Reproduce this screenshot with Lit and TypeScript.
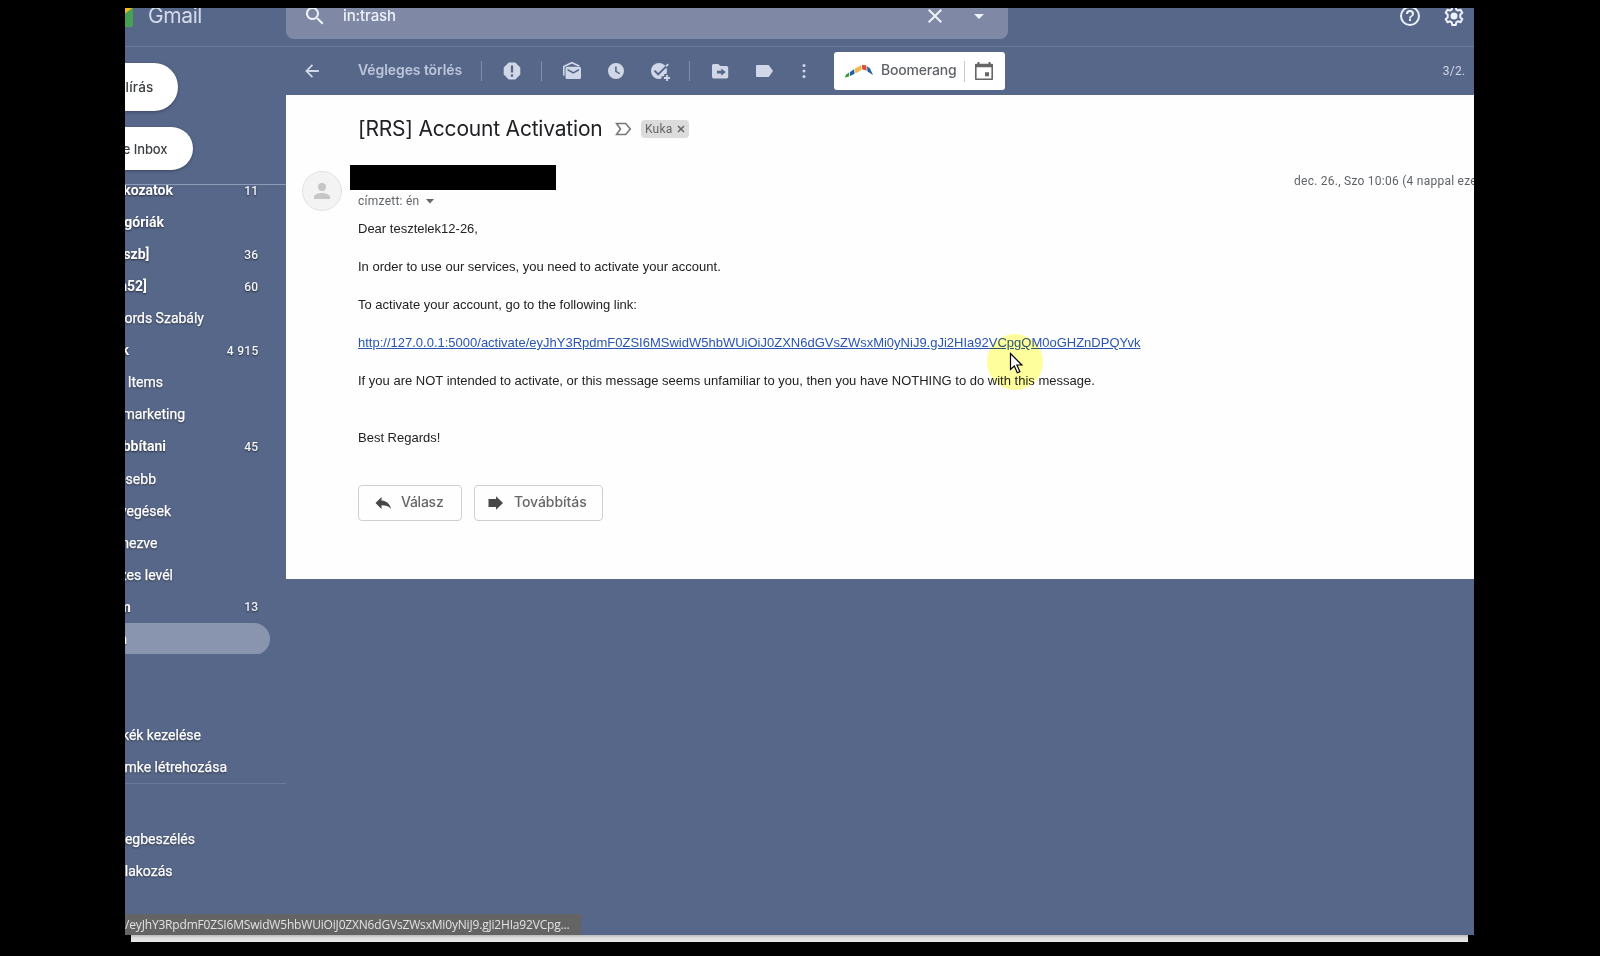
import { LitElement, html, css, svg } from 'lit';
import { customElement } from 'lit/decorators.js';
import { classMap } from 'lit/directives/class-map.js';

interface Label {
  text: string;
  width: number;
  count?: string;
  bold?: boolean;
  active?: boolean;
}

const labels: Label[] = [
  { text: 'Hivatkozatok', width: 48, count: '11', bold: true },
  { text: 'Kategóriák', width: 39, bold: true },
  { text: '[szb]', width: 24.5, count: '36', bold: true },
  { text: '[n52]', width: 22, count: '60', bold: true },
  { text: 'Records Szabály', width: 79 },
  { text: 'k', width: 4, count: '4 915', bold: true },
  { text: 'Items', width: 38 },
  { text: 'marketing', width: 60 },
  { text: 'továbbítani', width: 41, count: '45', bold: true },
  { text: 'Kevesebb', width: 31 },
  { text: 'Csevegések', width: 46 },
  { text: 'Ütemezve', width: 32.5 },
  { text: 'Összes levél', width: 48 },
  { text: 'Spam', width: 6, count: '13', bold: true },
  { text: 'Kuka', width: 2, active: true },
];
const manage: Label[] = [
  { text: 'Címkék kezelése', width: 76 },
  { text: 'Új címke létrehozása', width: 102 },
];
const meet: Label[] = [
  { text: 'Új megbeszélés', width: 70 },
  { text: 'Csatlakozás', width: 47.5 },
];

const token =
  'eyJhY3RpdmF0ZSI6MSwidW5hbWUiOiJ0ZXN6dGVsZWsxMi0yNiJ9.gJi2HIa92VCpg';

const icon = (body: unknown, size = 24) =>
  html`<svg class="icon" width=${size} height=${size} viewBox="0 0 24 24">${body}</svg>`;

const searchIcon = icon(svg`<path d="M16.500 14h-.8l-.3-.3A6.500 6.500 0 1 0 14.700 14.400l.3.3v.8l5 5 1.500-1.500zM10.500 14a4.500 4.500 0 1 1 0-9 4.500 4.500 0 0 1 0 9z"/>`);
const closeIcon = icon(svg`<path d="M19 6.400 17.600 5 12 10.600 6.400 5 5 6.400 10.600 12 5 17.600 6.400 19 12 13.400 17.600 19 19 17.600 13.400 12z"/>`);
const caretIcon = icon(svg`<path d="M7 10l5 5 5-5z"/>`);
const helpIcon = icon(svg`<path d="M11 17h2v-2h-2zm1-15a10 10 0 1 0 0 20 10 10 0 0 0 0-20zm0 18a8 8 0 1 1 0-16 8 8 0 0 1 0 16zm0-14a4 4 0 0 0-4 4h2a2 2 0 1 1 4 0c0 2-3 1.750-3 4.500h2c0-2 3-2.250 3-4.500a4 4 0 0 0-4-4z"/>`);
const gearIcon = icon(svg`<path fill="none" stroke="currentColor" stroke-width="2" stroke-linejoin="round" d="M10.200 3h3.600l.5 2.600 1.700 1 2.500-.9 1.800 3.100-2 1.700v2.900l2 1.700-1.800 3.100-2.500-.9-1.700 1-.5 2.700h-3.600l-.5-2.700-1.700-1-2.500.9-1.800-3.100 2-1.700v-2.900l-2-1.700 1.800-3.100 2.500.9 1.700-1z"/><circle cx="12" cy="12" r="3.500"/>`);
const backIcon = icon(svg`<path d="M19.500 11H8.300l4.900-4.900L11.800 4.700 4.500 12l7.300 7.300 1.400-1.400L8.300 13h11.200z"/>`, 22);
const spamIcon = icon(svg`<path fill-rule="evenodd" d="M8.700 3.500h6.600l5 5v7l-5 5H8.700l-5-5v-7zM10.900 6.500v7h2.200v-7zM12 15.300a1.300 1.300 0 1 0 0 2.600 1.300 1.300 0 0 0 0-2.600z"/>`);
const mailIcon = icon(svg`<path fill="none" stroke="currentColor" stroke-width="1.600" d="M3.800 16.500V7.500l8-3.800L19.300 7"/><path fill-rule="evenodd" d="M7 7.800h12.500A1.500 1.500 0 0 1 21 9.300v9.200a1.500 1.500 0 0 1-1.500 1.500H7a1.500 1.500 0 0 1-1.500-1.500V9.300A1.500 1.500 0 0 1 7 7.800zM7.500 9.800v1.700l5.800 3.300 5.800-3.300V9.800l-5.800 3.200z"/>`);
const clockIcon = icon(svg`<path fill-rule="evenodd" d="M12 4a8 8 0 1 0 0 16 8 8 0 0 0 0-16zm-.9 3.500v5.200l4.200 2.600.8-1.300-3.400-2V7.500z"/>`);
const taskIcon = icon(svg`<circle cx="11" cy="12" r="8"/><path fill="none" stroke="#57678a" stroke-width="3.600" d="M13.500 19h8M18 15v8"/><path fill="none" stroke="#57678a" stroke-width="2" d="M6.500 11.600l3.700 3.800L20 5.600"/><path fill="none" stroke="currentColor" stroke-width="1.800" d="M18 7.400l2.200-2.200M16 19h6M19 16v6"/>`);
const moveIcon = icon(svg`<path fill-rule="evenodd" d="M5.600 5h4.600l2 2h6.400A1.600 1.600 0 0 1 20.200 8.600v9.200a1.600 1.600 0 0 1-1.600 1.600h-13A1.600 1.600 0 0 1 4 17.800V6.600A1.600 1.600 0 0 1 5.600 5zM9 11.800v2.600h4.200v2.400l4.600-3.700-4.600-3.700v2.400z"/>`);
const tagIcon = icon(svg`<path d="M16 6H5.300A1.300 1.300 0 0 0 4 7.300v9.400A1.300 1.300 0 0 0 5.300 18H16c.5 0 .9-.2 1.100-.6L21 12l-3.900-5.400c-.2-.4-.6-.6-1.100-.6z"/>`);
const dotsIcon = icon(svg`<circle cx="12" cy="6.500" r="1.500"/><circle cx="12" cy="12" r="1.500"/><circle cx="12" cy="17.500" r="1.500"/>`);
const boomerangIcon = html`<svg width="30" height="16" viewBox="0 0 30 16">
  <path fill="#3a9a3a" d="M1 14.800 1.800 11.800 5 9.600 5.200 13.200z" />
  <path fill="#1f5fa8" d="M5.800 9.200 10 6.200 10.600 10.800 6 12.900z" />
  <path fill="#f0b848" d="M10.700 5.700 17 2.300 17.600 7 11.400 10.400z" />
  <path fill="#dc4f38" d="M17.800 2l4.500.2.400 5.200-4.400-.8z" />
  <path fill="#1f5fa8" d="M23 3.300 26 5.500 29 12 23.500 8.500z" />
</svg>`;
const calendarIcon = html`<svg width="20" height="20" viewBox="0 0 20 20">
  <path fill="none" stroke="#666" stroke-width="1.600" d="M1.800 3.500h16.400v14.700H1.800z" stroke-linejoin="round" />
  <path fill="#666" d="M1 3h18v3.200H1zM3.500 1h2v3h-2zM14.500 1h2v3h-2zM11 11.200h4v4h-4z" />
</svg>`;

@customElement('app-root')
export class AppRoot extends LitElement {
  static styles = css`
    :host {
      display: block;
      height: 956px;
      box-sizing: border-box;
      padding: 8px 126px 0 125px;
      background: #000;
      overflow: hidden;
      font-family: Roboto, sans-serif;
    }
    * {
      box-sizing: border-box;
    }
    svg {
      display: block;
      flex: none;
    }
    .icon {
      fill: currentColor;
    }
    .window {
      position: relative;
      height: 927px;
      overflow: hidden;
      background: #576789;
      display: flex;
      flex-direction: column;
    }
    .taskline {
      height: 7px;
      margin: 0 6px;
      background: linear-gradient(#b8b8b8, #dedede 40%, #e8e8e8);
    }
    header {
      display: flex;
      height: 39px;
      flex: none;
      border-bottom: 1px solid #6b7a9b;
      color: #eef2fa;
    }
    .brand {
      width: 161px;
      height: 16px;
      display: flex;
      align-items: center;
      gap: 15px;
      font: 400 21px/16px Inter, sans-serif;
      letter-spacing: -0.4px;
      color: #d3daea;
    }
    .brand svg {
      align-self: flex-start;
    }
    .search {
      width: 722px;
      height: 31px;
      background: #7f89a5;
      border-radius: 0 0 8px 8px;
    }
    .search-row {
      height: 15px;
      padding: 0 17px 0 16px;
      display: flex;
      align-items: center;
    }
    .query {
      flex: 1;
      padding-left: 17px;
      font: 500 15px/16px Inter, sans-serif;
      letter-spacing: -0.1px;
    }
    .search-row .icon + .icon {
      margin-left: 20px;
    }
    .tools {
      flex: 1;
      height: 15px;
      padding-right: 8px;
      display: flex;
      align-items: center;
      justify-content: flex-end;
      gap: 20px;
    }
    .body {
      flex: 1;
      min-height: 0;
      display: flex;
    }
    aside {
      width: 161px;
      flex: none;
      color: #fff;
    }
    .pill {
      display: flex;
      align-items: center;
      justify-content: flex-end;
      background: #fff;
      color: #3c4043;
      overflow: hidden;
      white-space: nowrap;
      box-shadow: 0 1px 3px rgba(30, 40, 60, 0.5);
      font: 500 13.500px/16px Inter, sans-serif;
    }
    .compose {
      width: 53px;
      height: 48px;
      margin-top: 16px;
      padding: 0 24.500px 1px 0;
      border-radius: 0 24px 24px 0;
      letter-spacing: 0.200px;
    }
    .inbox {
      width: 68px;
      height: 43px;
      margin-top: 16px;
      padding: 1px 25.500px 0 0;
      border-radius: 0 22px 22px 0;
      font-size: 13px;
      letter-spacing: -0.100px;
    }
    .list {
      margin-top: 14px;
      border-top: 1px solid #8d9ab6;
      overflow: hidden;
    }
    .list .row:first-child {
      margin-top: -11px;
    }
    .row {
      height: 32px;
      width: 145px;
      display: flex;
      align-items: center;
      justify-content: space-between;
      padding-right: 11.500px;
      font-size: 14px;
      text-shadow: 0 1px 2px rgba(0, 0, 0, 0.6);
    }
    .list .row:nth-child(n + 10) {
      position: relative;
      top: 0.500px;
    }
    .row.bold {
      font-weight: 700;
    }
    .row.active {
      background: #8994ae;
      border-radius: 0 16px 16px 0;
    }
    .label {
      display: flex;
      justify-content: flex-end;
      overflow: hidden;
      white-space: nowrap;
      line-height: 20px;
      -webkit-text-stroke: 0.250px currentColor;
    }
    .bold .label {
      -webkit-text-stroke: 0;
    }
    .count {
      padding-top: 1px;
      font-size: 12px;
      font-weight: 500;
      letter-spacing: 0.300px;
      color: #f2f4f9;
    }
    .manage {
      padding-top: 65px;
      border-bottom: 1px solid #6b7a9b;
    }
    .meet {
      padding-top: 39px;
    }
    main {
      flex: 1;
      min-width: 0;
    }
    .toolbar {
      height: 48px;
      display: flex;
      align-items: center;
      padding: 0 8.500px 0 15px;
      color: #d0d7e6;
    }
    .delete {
      width: 104px;
      margin: 0 19px 0 35px;
      padding-bottom: 2px;
      white-space: nowrap;
      font: 600 14px/16px Inter, sans-serif;
      letter-spacing: -0.080px;
      color: #bcc6dc;
    }
    .divider {
      width: 1px;
      height: 20px;
      background: #7f8cab;
    }
    .divider + .group {
      margin-left: 18px;
    }
    .group {
      display: flex;
      gap: 20px;
      margin-right: 17px;
    }
    .last {
      margin-right: 18px;
    }
    .last .icon:last-child {
      margin-left: -4px;
    }
    .boomerang {
      width: 171px;
      height: 38px;
      padding: 0 11px 0 10px;
      border-radius: 3px;
      background: #fff;
      display: flex;
      align-items: center;
      color: #5f6368;
      font: 500 14px/16px Inter, sans-serif;
      letter-spacing: -0.200px;
    }
    .boomerang span {
      width: 76px;
      margin-left: 7px;
      padding-bottom: 2px;
    }
    .boomerang i {
      width: 1px;
      height: 21px;
      margin: 0 9px 0 7px;
      background: #c8c8c8;
    }
    .pager {
      margin-left: auto;
      font-size: 12px;
      letter-spacing: 0.300px;
    }
    .mail {
      height: 484px;
      background: #fefefe;
      overflow: hidden;
      color: #222;
    }
    .subject {
      height: 26px;
      margin: 21px 0 0 72px;
      display: flex;
      align-items: center;
    }
    h2 {
      margin: 0;
      width: 257px;
      white-space: nowrap;
      font: 400 21px/26px Inter, sans-serif;
      letter-spacing: -0.200px;
      color: #202124;
    }
    .chip {
      width: 48px;
      height: 18px;
      margin-left: 9px;
      padding: 0 4px;
      display: flex;
      align-items: center;
      justify-content: space-between;
      border-radius: 4px;
      background: #dcdcdc;
      color: #666;
      font-size: 12px;
      letter-spacing: 0.200px;
    }
    .sender {
      display: flex;
      height: 54px;
      margin: 23px 0 0 16px;
    }
    .avatar {
      width: 40px;
      height: 40px;
      margin-top: 6px;
      border-radius: 50%;
      border: 1px solid #e2e2e2;
      background: #f3f3f3;
      display: flex;
      align-items: center;
      justify-content: center;
      color: #c6c6c6;
    }
    .who {
      margin-left: 8px;
      flex: 1;
    }
    .name {
      width: 206px;
      height: 25px;
      background: #000;
    }
    .to {
      display: flex;
      align-items: center;
      gap: 7px;
      height: 22px;
      padding-left: 8px;
      font-size: 12px;
      letter-spacing: 0.250px;
      color: #5f6368;
    }
    .date {
      width: 180px;
      padding-top: 8px;
      overflow: hidden;
      white-space: nowrap;
      font-size: 12px;
      line-height: 16px;
      letter-spacing: 0.250px;
      color: #5f6368;
    }
    .text {
      margin-left: 72px;
      font: 13px/19px 'Liberation Sans', Arial, sans-serif;
      white-space: pre-line;
    }
    .text a {
      color: #2a55b4;
    }
    .actions {
      display: flex;
      gap: 12px;
      margin: 38px 0 0 72px;
    }
    .btn {
      height: 36px;
      display: flex;
      align-items: center;
      border: 1px solid #cfcfcf;
      border-radius: 4px;
      color: #666;
      font: 500 14px/16px Inter, sans-serif;
    }
    .btn svg {
      margin: 0 9px 0 15px;
      fill: #484848;
    }
    .btn span {
      padding-bottom: 2px;
    }
    .reply {
      width: 104px;
      letter-spacing: -0.250px;
    }
    .forward {
      width: 129px;
      letter-spacing: -0.070px;
    }
    .forward svg {
      margin: 0 10px 0 13px;
    }
    .status {
      position: absolute;
      left: 0;
      bottom: 0;
      width: 456px;
      height: 21px;
      padding: 1px 11.500px 0 0;
      display: flex;
      justify-content: flex-end;
      overflow: hidden;
      white-space: nowrap;
      background: #646464;
      color: #e2e2e2;
      font: 12px/20px 'Open Sans', sans-serif;
      letter-spacing: -0.180px;
    }
    .halo {
      position: absolute;
      left: 862px;
      top: 326px;
      width: 56px;
      height: 56px;
      border-radius: 50%;
      background: #ffff9c;
      opacity: 0.99;
      mix-blend-mode: multiply;
    }
    .pointer {
      position: absolute;
      left: 884px;
      top: 344px;
    }
  `;

  private row(l: Label) {
    return html`<div class=${classMap({ row: true, bold: !!l.bold, active: !!l.active })}>
      <span class="label" style="width:${l.width}px">${l.text}</span>
      ${l.count ? html`<span class="count">${l.count}</span>` : null}
    </div>`;
  }

  render() {
    return html`
      <div class="window">
        <header>
          <div class="brand">
            <svg width="8" height="20" viewBox="0 0 8 20">
              <path fill="#45a052" d="M0 0h8v17.500a1.500 1.500 0 0 1-1.500 1.500H0z" />
              <path fill="#f2bb1c" d="M0 0h7.500L0 5.500z" />
            </svg>
            <span>Gmail</span>
          </div>
          <div class="search">
            <div class="search-row">${searchIcon}<span class="query">in:trash</span>${closeIcon}${caretIcon}</div>
          </div>
          <div class="tools">${helpIcon}${gearIcon}</div>
        </header>
        <div class="body">
          <aside>
            <div class="pill compose">lírás</div>
            <div class="pill inbox">Pause Inbox</div>
            <div class="list">${labels.map((l) => this.row(l))}</div>
            <div class="manage">${manage.map((l) => this.row(l))}</div>
            <div class="meet">${meet.map((l) => this.row(l))}</div>
          </aside>
          <main>
            <div class="toolbar">
              ${backIcon}
              <span class="delete">Végleges törlés</span>
              <div class="divider"></div>
              <div class="group">${spamIcon}</div>
              <div class="divider"></div>
              <div class="group">${mailIcon}${clockIcon}${taskIcon}</div>
              <div class="divider"></div>
              <div class="group last">${moveIcon}${tagIcon}${dotsIcon}</div>
              <div class="boomerang">${boomerangIcon}<span>Boomerang</span><i></i>${calendarIcon}</div>
              <span class="pager">3/2.</span>
            </div>
            <div class="mail">
              <div class="subject">
                <h2>[RRS] Account Activation</h2>
                <svg width="17" height="14" viewBox="0 0 17 14">
                  <path fill="none" stroke="#777" stroke-width="1.600" d="M1.500 1.500h9.200L15.300 7l-4.600 5.500H1.500L5.500 7z" />
                </svg>
                <div class="chip">
                  <span>Kuka</span>
                  <svg width="8" height="8" viewBox="0 0 8 8">
                    <path stroke="#666" stroke-width="1.500" d="M1 1l6 6M7 1 1 7" />
                  </svg>
                </div>
              </div>
              <div class="sender">
                <div class="avatar">${icon(svg`<circle cx="12" cy="8" r="4"/><path d="M12 14c-3.500 0-8 1.500-8 4v2h16v-2c0-2.500-4.500-4-8-4z"/>`)}</div>
                <div class="who">
                  <div class="name"></div>
                  <div class="to">
                    <span>címzett: én</span>
                    <svg width="8" height="5" viewBox="0 0 8 5"><path fill="#666" d="M0 0h8L4 4.500z" /></svg>
                  </div>
                </div>
                <div class="date">dec. 26., Szo 10:06 (4 nappal ezelőtt)</div>
              </div>
              <div class="text">Dear tesztelek12-26,<br /><br />In order to use our services, you need to activate your account.<br /><br />To activate your account, go to the following link:<br /><br /><a href="#">http://127.0.0.1:5000/activate/${token}QM0oGHZnDPQYvk</a><br /><br />If you are NOT intended to activate, or this message seems unfamiliar to you, then you have NOTHING to do with this message.<br /><br /><br />Best Regards!</div>
              <div class="actions">
                <div class="btn reply">
                  <svg width="18" height="18" viewBox="0 0 18 18"><path d="M7.500 3v3.500C12.500 7 16 9.800 17.200 15 14.500 12 11.500 11.300 7.500 11.300V15L1.500 9z" /></svg>
                  <span>Válasz</span>
                </div>
                <div class="btn forward">
                  <svg width="16" height="16" viewBox="0 0 16 16"><path d="M.500 4H8V1.200L15 8l-7 6.800V12H.500z" /></svg>
                  <span>Továbbítás</span>
                </div>
              </div>
            </div>
          </main>
        </div>
        <div class="status">127.0.0.1:5000/activate/${token}...</div>
        <div class="halo"></div>
        <svg class="pointer" width="15" height="24" viewBox="0 0 15 24">
          <path fill="#fff" stroke="#000" stroke-width="1.200" d="M1.500 1.500v16l3.800-3.500 3 6.800 2.600-1.100-3-6.700h5z" />
        </svg>
      </div>
      <div class="taskline"></div>
    `;
  }
}
